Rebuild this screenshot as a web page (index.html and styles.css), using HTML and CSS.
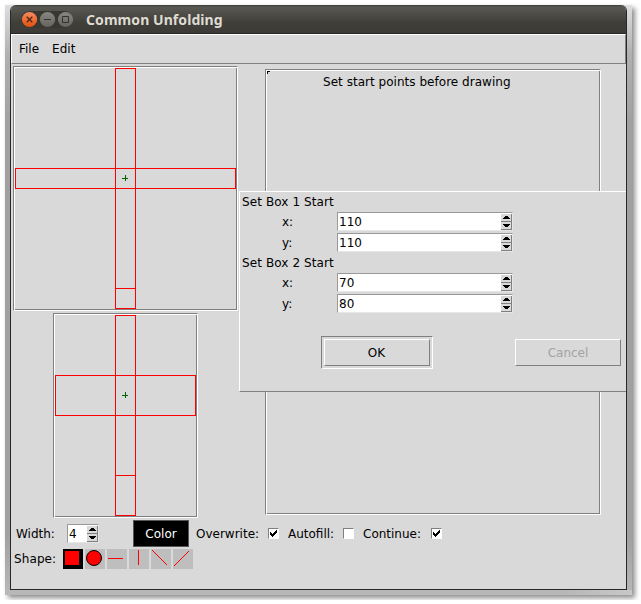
FILE: index.html
```html
<!DOCTYPE html>
<html lang="en">
<head>
<meta charset="utf-8">
<title>Common Unfolding</title>
<link rel="stylesheet" href="styles.css">
</head>
<body>
<svg class="defs" aria-hidden="true">
  <symbol id="up" viewBox="0 0 11 8"><path d="M4 2h3v1h1v1h1v1H2V4h1V3h1z"/></symbol>
  <symbol id="down" viewBox="0 0 11 8"><path d="M2 2h7v1H8v1H7v1H4V4H3V3H2z"/></symbol>
  <symbol id="check" viewBox="0 0 9 9"><path d="M1 3h1v1h1v1h1V4h1V3h1V2h1V1h1v3H7v1H6v1H5v1H4v1H3V7H2V6H1z"/></symbol>
</svg>
<div class="frame">
  <div class="window">
    <header class="titlebar">
      <div class="controls">
        <svg width="52" height="17" viewBox="0 0 52 17">
          <defs>
            <linearGradient id="orange" x1="0" y1="0" x2="0" y2="1"><stop offset="0" stop-color="#f68b63"/><stop offset="1" stop-color="#e35009"/></linearGradient>
            <linearGradient id="grey" x1="0" y1="0" x2="0" y2="1"><stop offset="0" stop-color="#89887f"/><stop offset="1" stop-color="#64635d"/></linearGradient>
          </defs>
          <rect width="52" height="17" rx="8.5" fill="#383732"/>
          <circle cx="8.5" cy="8.5" r="7.6" fill="url(#orange)"/>
          <circle cx="26.5" cy="8.5" r="7.6" fill="url(#grey)"/>
          <circle cx="44.5" cy="8.5" r="7.6" fill="url(#grey)"/>
          <path d="M5.700 5.700l5.600 5.600M11.300 5.700l-5.600 5.600" stroke="#49261a" stroke-width="1.3"/>
          <path d="M23 8.500h7M41.500 5.500h6v6h-6z" stroke="#33322e" fill="none"/>
        </svg>
      </div>
      <h1 class="title">Common Unfolding</h1>
    </header>
    <nav class="menu"><span>File</span><span>Edit</span></nav>
    <main class="work">
      <div class="boxes">
        <div class="canvas box-one">
          <svg width="221" height="241">
            <path class="net" d="M100.500 0.500h20v240h-20zM0.500 100.500h220v20h-220zM100.500 220.500h20"/>
            <path class="mark" d="M107 110.500h6M110.500 107v6"/>
          </svg>
        </div>
        <div class="canvas box-two">
          <svg width="141" height="201">
            <path class="net" d="M60.500 0.500h20v200h-20zM0.500 60.500h140v40h-140zM60.500 160.500h20"/>
            <path class="mark" d="M67 80.500h6M70.500 77v6"/>
          </svg>
        </div>
      </div>
      <div class="canvas drawing"><span class="hint">Set start points before drawing</span></div>
    </main>
    <div class="tools">
      <span>Width:</span>
      <div class="spin"><span>4</span><div class="steps"><svg><use href="#up"/></svg><svg><use href="#down"/></svg></div></div>
      <div class="color">Color</div>
      <span>Overwrite:</span><div class="box"><svg><use href="#check"/></svg></div>
      <span>Autofill:</span><div class="box"></div>
      <span>Continue:</span><div class="box"><svg><use href="#check"/></svg></div>
    </div>
    <div class="shapes">
      <span class="shape-label">Shape:</span>
      <svg><path d="M0 0h20v20H0z"/><path d="M2 2h14v14H2z" fill="#f00"/></svg>
      <svg><circle cx="9" cy="9" r="7.500" fill="#f00" stroke="#000"/></svg>
      <svg><path class="net" d="M1 9.500h15"/></svg>
      <svg><path class="net" d="M9.500 1v15"/></svg>
      <svg><path class="slope" d="M1 1l15 15"/></svg>
      <svg><path class="slope" d="M1 17l15-15"/></svg>
    </div>
    <section class="dialog">
      <div class="group">Set Box 1 Start</div>
      <div class="field"><span>x:</span><div class="spin"><span>110</span><div class="steps"><svg><use href="#up"/></svg><svg><use href="#down"/></svg></div></div></div>
      <div class="field"><span>y:</span><div class="spin"><span>110</span><div class="steps"><svg><use href="#up"/></svg><svg><use href="#down"/></svg></div></div></div>
      <div class="group">Set Box 2 Start</div>
      <div class="field"><span>x:</span><div class="spin"><span>70</span><div class="steps"><svg><use href="#up"/></svg><svg><use href="#down"/></svg></div></div></div>
      <div class="field"><span>y:</span><div class="spin"><span>80</span><div class="steps"><svg><use href="#up"/></svg><svg><use href="#down"/></svg></div></div></div>
      <div class="actions"><div class="default"><div class="button">OK</div></div><div class="button disabled">Cancel</div></div>
    </section>
  </div>
</div>
</body>
</html>
```
FILE: styles.css
```css
* { box-sizing: border-box; }
body { margin: 0; background: #fff; overflow: hidden; font: 12px/18px "DejaVu Sans", sans-serif; color: #000; }
svg { display: block; shape-rendering: crispEdges; }
.defs { width: 0; height: 0; position: absolute; }
.frame {
  width: 627px; height: 590px; margin: 5px; padding: 0 5px 5px;
  background:
    linear-gradient(to right, #b8b8b8, rgba(150,150,150,0) 50px, rgba(150,150,150,0) 560px, #c8c8c8) bottom / 100% 5px no-repeat,
    linear-gradient(#dedede, #b0b0b0 50px, #a0a0a0 120px, #a0a0a0 530px, #b8b8b8);
  box-shadow: 3px 3px 5px rgba(0,0,0,.45);
}
.window { position: relative; width: 617px; height: 585px; border: 1px solid #28282a; border-top: 0; border-radius: 6px 6px 0 0; background: #d9d9d9; overflow: hidden; }
.titlebar { height: 29px; display: flex; align-items: center; padding: 0 0 0 10px; background: linear-gradient(#3c3b37, #595852 2px, #3f3e39 18px, #3c3b37 28px, #282725 28px); }
.controls svg { shape-rendering: auto; }
.title { margin: 1px 0 0 13px; font: bold 14px/20px "Noto Sans", sans-serif; letter-spacing: .07px; color: #dfdbd2; white-space: nowrap; }
.menu { height: 30px; display: flex; gap: 13px; padding: 5px 0 0 7px; border: 1px solid #808080; border-color: #fff #808080 #808080 #fff; }
.work { display: flex; gap: 27px; padding: 2px 0 0 2px; height: 456px; }
.canvas { border: 1px solid; border-color: #808080 #fff #fff #808080; }
.box-one, .box-two, .drawing { box-shadow: inset 1px 1px #fff, inset -1px -1px #808080; }
.box-one { width: 225px; height: 245px; padding: 1px; }
.box-two { width: 145px; height: 205px; margin: 2px 0 0 40px; padding: 1px; }
.drawing { width: 336px; height: 446px; margin-top: 3px; padding: 3px 0 0 57px; background: linear-gradient(#000,#000) 1px 1px / 3px 1px no-repeat, linear-gradient(#000,#000) 1px 1px / 1px 3px no-repeat; }
.hint { white-space: nowrap; letter-spacing: .03px; }
.net { fill: none; stroke: #f00; stroke-width: 1; }
.mark { fill: none; stroke: #006400; }
.slope { stroke: #f00; stroke-width: 1; }
.tools { display: grid; grid-template-columns: 51px 66px 63px 72px 20px 55px 20px 68px 11px; align-items: center; height: 27px; padding-left: 5px; white-space: nowrap; }
.spin { width: 32px; height: 19px; display: flex; justify-content: space-between; padding-left: 1px; border: 1px solid; border-color: #999 #e6e6e6 #e6e6e6 #999; background: #fff; }
.spin > span { line-height: 18px; }
.steps { display: grid; grid-template-rows: 8px 8px; width: 11px; padding-top: 1px; }
.steps svg { width: 11px; height: 8px; background: #d9d9d9; box-shadow: inset -1px -1px #808080; }
.color { width: 56px; height: 27px; border: 1px solid #555; background: #000; color: #fff; text-align: center; line-height: 26px; }
.box { width: 11px; height: 11px; border: 1px solid; border-color: #808080 #fff #fff #808080; background: #fff; }
.box svg { width: 9px; height: 9px; }
.shapes { display: flex; gap: 2px; margin-top: 2px; padding-left: 3px; height: 20px; }
.shape-label { width: 47px; line-height: 20px; letter-spacing: .1px; }
.shapes svg { width: 20px; height: 20px; background: #bebebe; }
.shapes circle { shape-rendering: auto; }
.dialog { position: absolute; left: 228px; top: 186px; width: 388px; height: 201px; border: 1px solid; border-color: #fff #d9d9d9 #808080 #fff; background: #d9d9d9; }
.group { height: 20px; padding-left: 2px; line-height: 20px; letter-spacing: .1px; }
.field + .group { height: 21px; line-height: 22px; }
.field { display: grid; grid-template-columns: 55px 176px; padding-left: 42px; height: 19px; line-height: 20px; }
.field + .field { margin-top: 2px; }
.field .spin { width: 176px; }
.actions { display: flex; align-items: center; margin: 23px 0 0 81px; gap: 82px; }
.default { border: 1px solid; border-color: #808080 #fff #fff #808080; padding: 2px; width: 112px; height: 33px; }
.button { width: 106px; height: 27px; border: 1px solid; border-color: #fff #808080 #808080 #fff; text-align: center; line-height: 26px; }
.default .button { padding-right: 1px; }
.disabled { color: #a3a3a3; }
```
